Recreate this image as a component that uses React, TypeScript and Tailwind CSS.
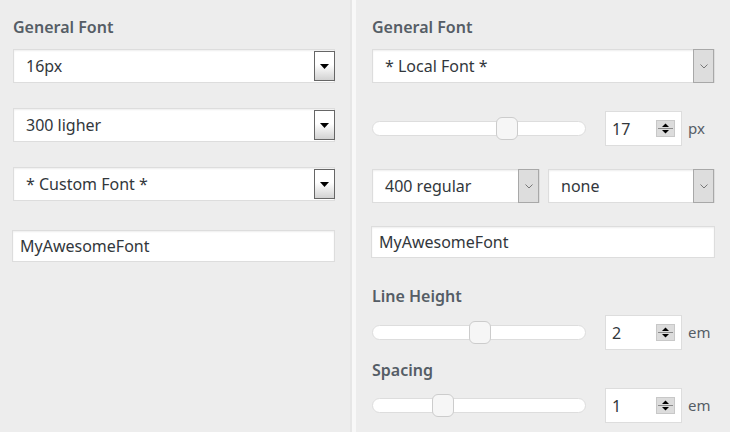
import React from 'react'

const font = { fontFamily: '"Noto Sans", "Open Sans", sans-serif' }

function ClassicSelect({ value }: { value: string }) {
    return (
        <div className="flex h-[34px] bg-white border border-[#dddddd] shadow-[inset_0_1px_2px_rgba(0,0,0,0.07)]">
            <span className="flex-1 pl-[12px] text-[16px] leading-[32px] text-[#32373c]">{value}</span>
            <div className="w-[21px] -mr-px my-px flex justify-center border border-[#666666] bg-linear-to-b from-white from-45% to-[#d2d2d2]">
                <svg width="9" height="5" viewBox="0 0 9 5" className="mt-[12px]">
                    <path d="M0 0h9L4.5 5z" fill="#000" />
                </svg>
            </div>
        </div>
    )
}

function ModernSelect({ value, className = '' }: { value: string; className?: string }) {
    return (
        <div className={`flex h-[34px] bg-white border border-[#dddddd] shadow-[inset_0_1px_2px_rgba(0,0,0,0.07)] ${className}`}>
            <span className="flex-1 pl-[12px] text-[16px] leading-[32px] text-[#32373c]">{value}</span>
            <div className="w-[21px] -my-px flex items-center justify-center border border-[#a8a8a8] bg-[#dddddd]">
                <svg width="8" height="5" viewBox="0 0 8 5">
                    <path d="M0.5 0.5L4 4L7.5 0.5" fill="none" stroke="#777" strokeWidth="1" />
                </svg>
            </div>
        </div>
    )
}

function TextField({ value, className = '' }: { value: string; className?: string }) {
    return (
        <div className={`h-[32px] bg-white border border-[#dddddd] pl-[7px] text-[16px] leading-[30px] text-[#32373c] shadow-[inset_0_1px_2px_rgba(0,0,0,0.07)] ${className}`}>
            {value}
        </div>
    )
}

function Spinner() {
    return (
        <svg width="19" height="17" viewBox="0 0 19 17">
            <rect x="0" y="0" width="19" height="17" fill="#dcdcdc" />
            <rect x="0.5" y="0.5" width="18" height="16" fill="none" stroke="#c8c8c8" />
            <path d="M6 7h7L9.5 3.5z" fill="#000" />
            <path d="M2 8.5h15" stroke="#8a8a8a" />
            <path d="M6 10h7L9.5 13.5z" fill="#000" />
        </svg>
    )
}

function SliderRow({ pos, value, unit }: { pos: number; value: string; unit: string }) {
    return (
        <div className="flex items-center">
            <div className="relative w-[214px] h-[15px] rounded-full bg-white border border-[#dddddd]">
                <div
                    className="absolute top-[-5px] w-[22px] h-[23px] rounded-[6px] bg-[#f6f6f6] border border-[#cccccc]"
                    style={{ left: pos }}
                />
            </div>
            <div className="ml-[19px] w-[77px] h-[35px] flex items-center bg-white border border-[#dddddd]">
                <span className="flex-1 pl-[6px] text-[16px] text-[#32373c]">{value}</span>
                <div className="mr-[6px] flex">
                    <Spinner />
                </div>
            </div>
            <span className="ml-[6px] text-[15px] text-[#555d66]">{unit}</span>
        </div>
    )
}

export default function App() {
    return (
        <div className="flex w-[730px] h-[432px] bg-[#ededed] overflow-hidden" style={font}>
            {/* Left column */}
            <div className="w-[350px] shrink-0 pl-[13px] pr-[15px] pt-[17px]">
                <h3 className="text-[16px] leading-[21px] font-semibold text-[#555d66]">General Font</h3>
                <div className="mt-[11px] flex flex-col gap-[25px]">
                    <ClassicSelect value="16px" />
                    <ClassicSelect value="300 ligher" />
                    <ClassicSelect value="* Custom Font *" />
                </div>
                <TextField value="MyAwesomeFont" className="mt-[29px] -ml-px" />
            </div>

            {/* Divider */}
            <div className="w-[2px] shrink-0 bg-[#e6e6e6]" />
            <div className="w-[4px] shrink-0 bg-[#f8f8f8]" />

            {/* Right column */}
            <div className="flex-1 pl-[16px] pr-[15px] pt-[17px]">
                <h3 className="text-[16px] leading-[21px] font-semibold text-[#555d66]">General Font</h3>
                <ModernSelect value="* Local Font *" className="mt-[11px]" />
                <div className="mt-[28px]">
                    <SliderRow pos={123} value="17" unit="px" />
                </div>
                <div className="mt-[23px] flex gap-[8px]">
                    <ModernSelect value="400 regular" className="w-[168px]" />
                    <ModernSelect value="none" className="flex-1" />
                </div>
                <TextField value="MyAwesomeFont" className="mt-[23px] -ml-px" />
                <h3 className="mt-[28px] text-[16px] leading-[20px] font-semibold text-[#555d66]">Line Height</h3>
                <div className="mt-[9px]">
                    <SliderRow pos={96} value="2" unit="em" />
                </div>
                <h3 className="mt-[10px] text-[16px] leading-[20px] font-semibold text-[#555d66]">Spacing</h3>
                <div className="mt-[8px]">
                    <SliderRow pos={59} value="1" unit="em" />
                </div>
            </div>
        </div>
    )
}
